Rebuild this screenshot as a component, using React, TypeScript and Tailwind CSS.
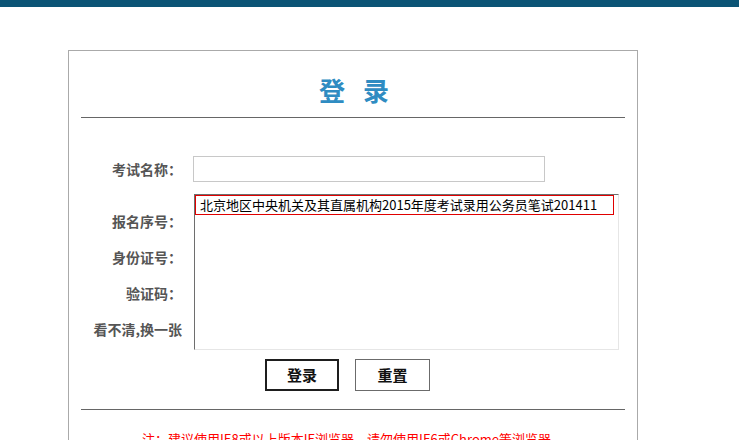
import React from "react";

const cjk = { fontFamily: '"Noto Sans CJK SC", "Noto Sans", sans-serif' };

export default function App() {
  const labels = ["报名序号：", "身份证号：", "验证码：", "看不清,换一张"];
  return (
    <div className="min-h-[440px] bg-white overflow-hidden" style={cjk}>
      <div className="h-[7px] bg-[#0b5475]" />
      <div className="relative ml-[68px] mt-[43px] w-[570px] border border-[#aaaaaa] pb-10">
        <div className="pt-[21px] flex justify-center gap-[18px] text-[26px] leading-[36px] font-bold text-[#2f8cc2] pl-[2px]">
          <span>登</span>
          <span>录</span>
        </div>
        <div className="mt-[9px] mx-[12px] h-px bg-[#666666]" />

        <div className="mt-[38px] flex items-center h-[26px]">
          <div className="w-[113px] text-right text-[14px] font-bold text-[#555555]">考试名称：</div>
          <div className="ml-[11px] w-[352px] h-[26px] border border-[#c8c8c8] bg-white" />
        </div>

        <div className="mt-[21px] flex flex-col">
          {labels.map((l) => (
            <div key={l} className="h-[36px] flex items-center">
              <div className="w-[113px] text-right text-[14px] font-bold text-[#555555] whitespace-nowrap">{l}</div>
            </div>
          ))}
        </div>

        <div className="mt-[12px] flex pl-[196px] gap-[16px]">
          <button className="w-[74px] h-[32px] border-2 border-[#1e1e1e] bg-white text-[15px] font-bold text-[#111111]">登录</button>
          <button className="w-[75px] h-[32px] border border-[#6b6b6b] bg-white text-[15px] font-bold text-[#111111]">重置</button>
        </div>

        <div className="mt-[18px] mx-[12px] h-px bg-[#666666]" />
        <div className="mt-[19px] text-center text-[13px] leading-[20px] text-[#ff0000]">
          注：建议使用IE8或以上版本IE浏览器，请勿使用IE6或Chrome等浏览器。
        </div>

        <div className="absolute left-[125px] top-[143px] w-[425px] h-[156px] bg-white border-t border-l border-t-[#6e6e6e] border-l-[#6e6e6e] border-r border-b border-r-[#e6e6e6] border-b-[#e6e6e6]">
          <div className="w-[419px] h-[20px] border border-[#e00000] pl-[4px] text-[13px] leading-[18px] text-black whitespace-nowrap overflow-hidden">
            北京地区中央机关及其直属机构2015年度考试录用公务员笔试201411
          </div>
        </div>
      </div>
    </div>
  );
}
